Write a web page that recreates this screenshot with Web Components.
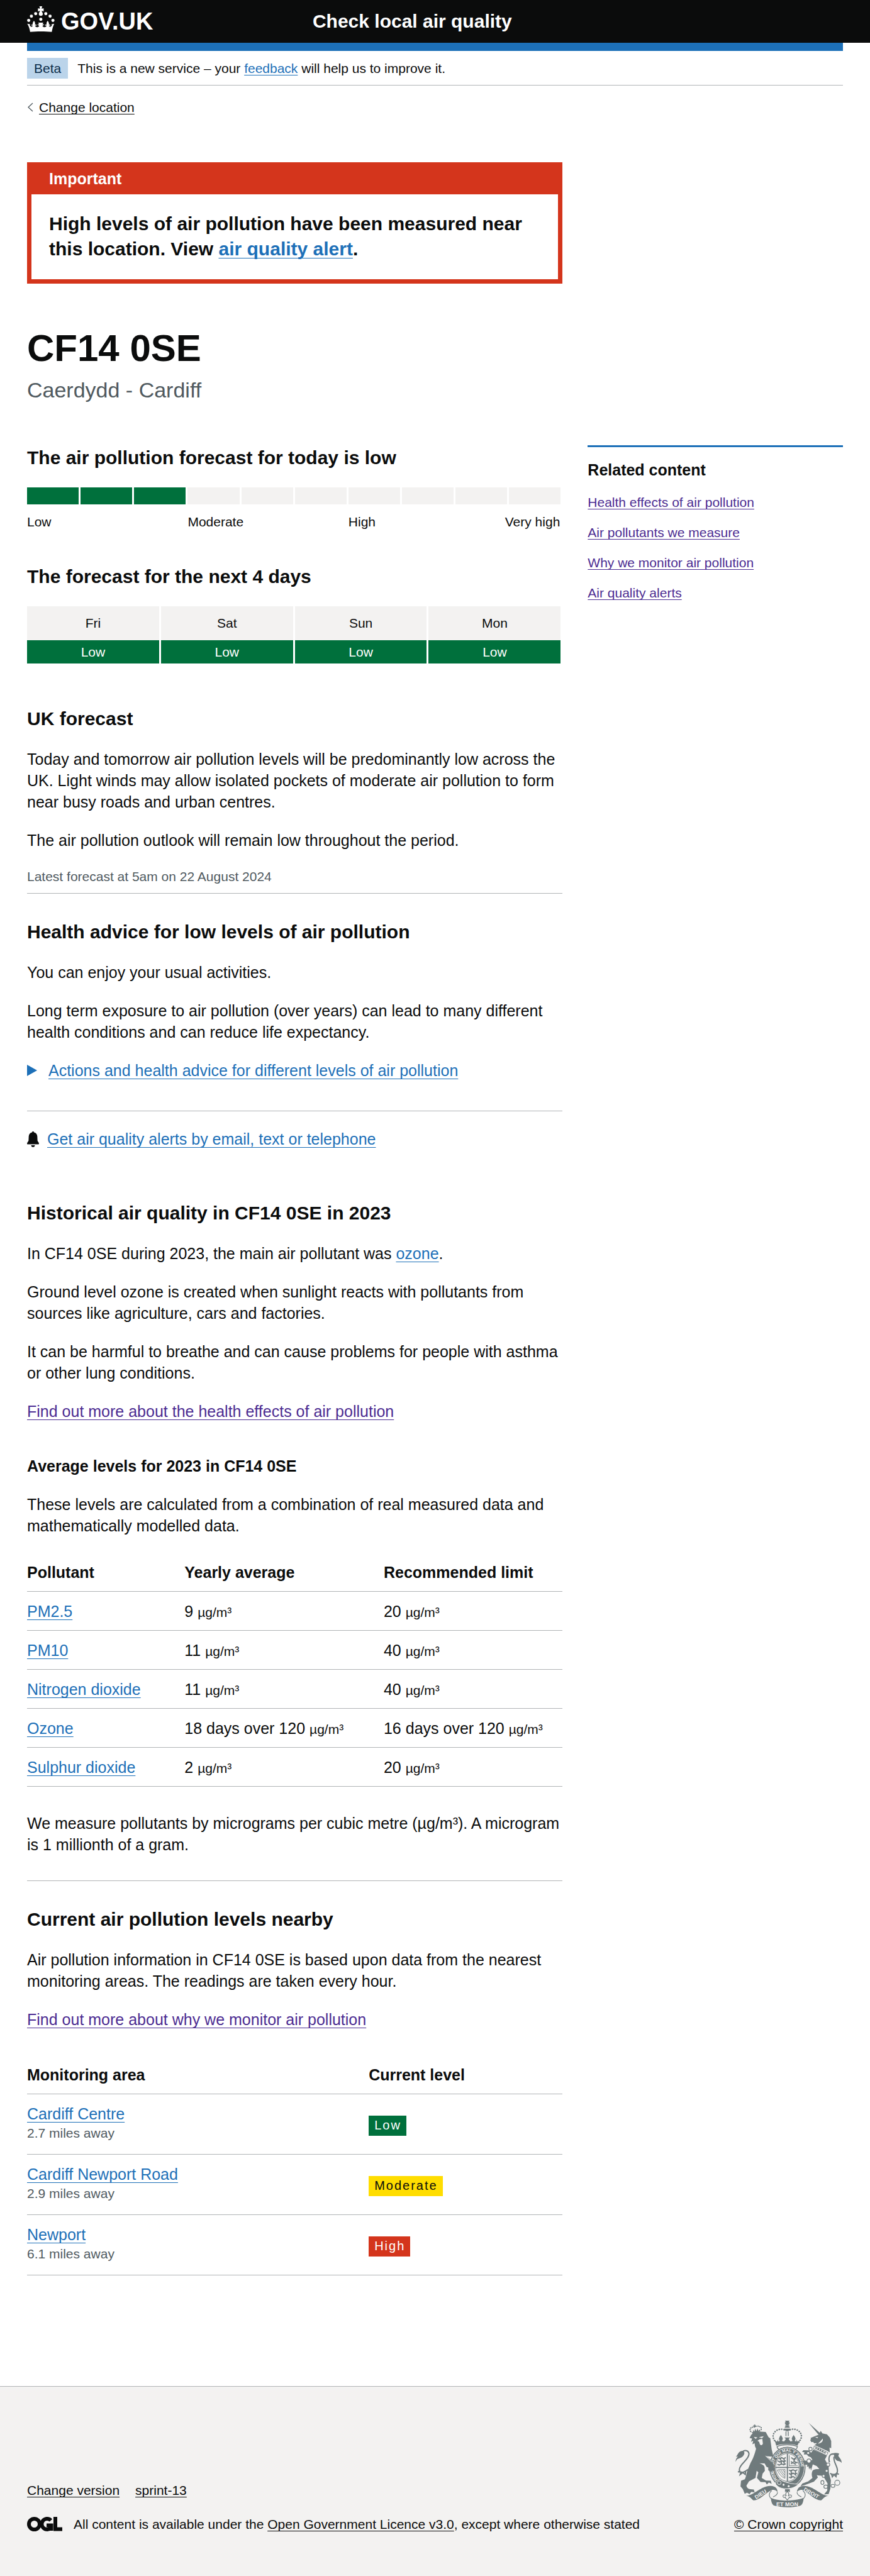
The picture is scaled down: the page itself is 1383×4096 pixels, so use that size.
<!DOCTYPE html>
<html lang="en">
<head>
<meta charset="utf-8">
<meta name="viewport" content="width=device-width, initial-scale=1">
<title>Check local air quality - GOV.UK</title>
<style>
  body {
    margin: 0;
    background: #fff;
    color: #0b0c0c;
    font-family: "Liberation Sans", Arial, Helvetica, sans-serif;
    font-size: 25px;
    line-height: 34px;
  }
</style>
</head>
<body>
<aq-header></aq-header>
<aq-phase-banner></aq-phase-banner>
<aq-layout>
  <aq-back-link slot="back">Change location</aq-back-link>
  <aq-alert slot="hero"></aq-alert>
  <aq-location slot="hero" area="Caerdydd - Cardiff">CF14 0SE</aq-location>
  <aq-today></aq-today>
  <aq-outlook></aq-outlook>
  <aq-uk-forecast></aq-uk-forecast>
  <aq-advice></aq-advice>
  <aq-history></aq-history>
  <aq-nearby></aq-nearby>
  <aq-related slot="aside"></aq-related>
</aq-layout>
<aq-footer></aq-footer>

<script>
const base = `
  :host { display: block; }
  * { box-sizing: border-box; }
  h1, h2, h3, p { margin: 0; }
  h2 { font-size: 30px; line-height: 40px; }
  h3 { font-size: 25px; line-height: 34px; }
  h2 + p, p + p, h3 + p { margin-top: 27px; }
  a { color: #1d70b8; text-decoration-line: underline; text-decoration-thickness: 1px; text-underline-offset: 4px; text-decoration-skip-ink: none; }
  a.visited { color: #4c2c92; }
  a.plain { color: #0b0c0c; }
  .small { font-size: 21px; line-height: 27px; }
  .muted { color: #505a5f; }
  hr { margin: 0; border: 0; height: 1px; background: #b1b4b6; }
  table { width: 100%; border-collapse: separate; border-spacing: 0; table-layout: fixed; text-align: left; }
  table.rows th, table.rows td { border-bottom: 1px solid #b1b4b6; padding: 14px 0 13px; font-weight: 400; }
  table.rows thead th { padding: 13px 0; font-weight: 700; }
  .wrap { padding-left: 43px; padding-right: 43px; }
`;

function define(name, css, html) {
  customElements.define(name, class extends HTMLElement {
    constructor() {
      super();
      const t = document.createElement('template');
      t.innerHTML = '<style>' + base + css + '</style>' + (typeof html === 'function' ? html(this) : html);
      this.attachShadow({ mode: 'open' }).append(t.content.cloneNode(true));
    }
  });
}

define('aq-crown', ':host { display: block; } svg { display: block; width: 44px; height: 41px; }', `
  <svg viewBox="72 42 193 181" fill="#fff" aria-hidden="true">
    <circle cx="83" cy="141" r="11"/><circle cx="102" cy="112" r="11"/><circle cx="132" cy="94" r="11"/>
    <circle cx="253" cy="141" r="11"/><circle cx="233" cy="112" r="11"/><circle cx="203" cy="94" r="11"/>
    <circle cx="168" cy="134" r="11"/>
    <path d="M158 42h20l-5 17 15-3v22l-14-5c1 10 8 14 8 23 0 8-6 13-14 13s-14-5-14-13c0-9 7-13 8-23l-14 5V56l15 3z"/>
    <path d="M74 164l20 5-4 7c8 14 18 12 22 2l-12-1c4-8 7-8 11-6-2-12 2-18 9-28 7 10 10 16 7 28 5-2 9-2 13 6l-13 1c4 12 20 16 30 2l-14-10c4-2 9-2 13 0-2-6-5-9-5-13h34c0 4-3 7-5 13 4-2 9-2 13 0l-14 10c10 14 26 10 30-2l-13-1c4-8 8-8 13-6-3-12 0-18 7-28 7 10 11 16 9 28 4-2 7-2 11 6l-12 1c4 10 14 12 22-2l-4-7 20-5c-9 20-14 38-17 58-44-5-108-5-152 0-3-20-8-38-20-58z"/>
  </svg>`);

define('aq-header', `
  header { background: #0b0c0c; color: #fff; }
  .bar { display: flex; align-items: center; height: 68px; }
  .logo { flex: 0 0 35%; display: flex; align-items: center; gap: 10px; color: #fff; text-decoration: none; font-size: 38px; font-weight: 700; line-height: 48px; }
  aq-crown { margin-bottom: 8px; }
  .service { font-size: 30px; line-height: 40px; font-weight: 700; color: #fff; text-decoration: none; }
  .stripe { height: 13px; background: #1d70b8; }
`, `
  <header><div class="wrap bar">
    <a class="logo" href="#"><aq-crown></aq-crown>GOV.UK</a>
    <a class="service" href="#">Check local air quality</a>
  </div></header>
  <div class="wrap"><div class="stripe"></div></div>`);

define('aq-phase-banner', `
  .row { display: flex; align-items: center; gap: 15px; padding: 11px 0 10px; border-bottom: 1px solid #b1b4b6; }
  .tag { background: #bbd4ea; color: #0c2d4a; padding: 3px 11px; font-weight: 400; }
  a { text-underline-offset: 3px; }
`, `
  <div class="wrap"><div class="row small">
    <strong class="tag">Beta</strong>
    <span>This is a new service – your <a href="#">feedback</a> will help us to improve it.</span>
  </div></div>`);

define('aq-back-link', `
  a { display: flex; width: max-content; align-items: center; gap: 8px; text-decoration: none; }
  svg { width: 11px; height: 15px; }
  span { text-decoration: underline 1px; text-underline-offset: 3px; text-decoration-skip-ink: none; }
`, `<a class="small plain" href="#"><svg viewBox="0 0 11 15" fill="none" stroke="#505a5f" stroke-width="1.300" aria-hidden="true"><path d="M9 1L2 7.500l7 6.500"/></svg><span><slot></slot></span></a>`);

define('aq-layout', `
  .back { padding-top: 21px; }
  .grid { display: grid; grid-template-columns: repeat(3, minmax(0, 1fr)); column-gap: 40px; padding-top: 74px; }
  .hero { grid-column: 1 / span 2; padding-bottom: 67px; }
  main { grid-column: 1 / span 2; grid-row: 2; display: flex; flex-direction: column; padding-bottom: 176px; }
  aside { grid-row: 2; }
`, `
  <div class="wrap">
    <div class="back"><slot name="back"></slot></div>
    <div class="grid">
      <div class="hero"><slot name="hero"></slot></div>
      <main><slot></slot></main>
      <aside><slot name="aside"></slot></aside>
    </div>
  </div>`);

define('aq-alert', `
  section { border: 7px solid #d4351c; border-top: 0; }
  .title { background: #d4351c; color: #fff; padding: 9px 28px 8px; font-size: 25px; line-height: 34px; }
  .body { padding: 27px 28px 28px; }
  .body p { font-size: 30px; line-height: 40px; font-weight: 700; }
`, `
  <section role="alert" aria-labelledby="t">
    <h2 class="title" id="t">Important</h2>
    <div class="body"><p>High levels of air pollution have been measured near this location. View <a href="#">air quality alert</a>.</p></div>
  </section>`);

define('aq-location', `
  :host { margin-top: 69px; }
  h1 { font-size: 60px; line-height: 68px; }
  p { margin-top: 12px; font-size: 34px; line-height: 41px; }
`, el => `<h1><slot></slot></h1><p class="muted">${el.getAttribute('area')}</p>`);

define('aq-today', `
  .scale { display: grid; grid-template-columns: repeat(10, 1fr); margin-top: 27px; }
  .scale i { height: 27px; background: #f3f2f1; border-right: 3px solid #fff; }
  .scale i.on { background: #00703c; }
  .names { display: grid; grid-template-columns: repeat(10, 1fr); margin-top: 14px; }
  .names span { grid-column: span 3; }
  .names .mid { grid-column: span 2; }
  .names .end { grid-column: span 2; text-align: right; padding-right: 4px; }
`, `
  <h2>The air pollution forecast for today is low</h2>
  <div class="scale" aria-hidden="true"><i class="on"></i><i class="on"></i><i class="on"></i><i></i><i></i><i></i><i></i><i></i><i></i><i></i></div>
  <div class="names small"><span>Low</span><span>Moderate</span><span class="mid">High</span><span class="end">Very high</span></div>`);

define('aq-outlook', `
  :host { margin-top: 54px; }
  table { margin-top: 27px; text-align: center; }
  th, td { border-right: 3px solid #fff; font-weight: 400; }
  th { background: #f3f2f1; padding: 13px 0 14px; }
  td { background: #00703c; color: #fff; padding: 5px 0; }
`, `
  <h2>The forecast for the next 4 days</h2>
  <table class="small">
    <thead><tr><th scope="col">Fri</th><th scope="col">Sat</th><th scope="col">Sun</th><th scope="col">Mon</th></tr></thead>
    <tbody><tr><td>Low</td><td>Low</td><td>Low</td><td>Low</td></tr></tbody>
  </table>`);

define('aq-uk-forecast', `
  :host { margin-top: 68px; }
  hr { margin-top: 13px; }
`, `
  <h2>UK forecast</h2>
  <p>Today and tomorrow air pollution levels will be predominantly low across the UK. Light winds may allow isolated pockets of moderate air pollution to form near busy roads and urban centres.</p>
  <p>The air pollution outlook will remain low throughout the period.</p>
  <p class="small muted">Latest forecast at 5am on 22 August 2024</p>
  <hr>`);

define('aq-advice', `
  :host { margin-top: 41px; }
  details { margin-top: 27px; }
  summary { display: flex; align-items: center; gap: 18px; color: #1d70b8; list-style: none; cursor: pointer; }
  summary svg { width: 16px; height: 18px; }
  summary span { text-decoration: underline 1px; text-underline-offset: 4px; text-decoration-skip-ink: none; }
  hr { margin: 47px 0 27px; }
  .alerts { display: flex; align-items: center; gap: 13px; }
  .alerts svg { width: 19px; height: 25px; }
`, `
  <h2>Health advice for low levels of air pollution</h2>
  <p>You can enjoy your usual activities.</p>
  <p>Long term exposure to air pollution (over years) can lead to many different health conditions and can reduce life expectancy.</p>
  <details>
    <summary><svg viewBox="0 0 16 18" fill="currentColor" aria-hidden="true"><path d="M0 0l16 9-16 9z"/></svg><span>Actions and health advice for different levels of air pollution</span></summary>
  </details>
  <hr>
  <div class="alerts">
    <svg viewBox="0 0 19 25" fill="#0b0c0c" aria-hidden="true"><path d="M9.500 0c1 0 1.500.7 1.500 1.600 3.300.7 5.200 3.200 5.300 6.400l.3 6.500c.1 1.600 2.400 3 2.400 5 0 .8-.4 1.100-1.200 1.100H1.200C.4 20.600 0 20.300 0 19.500c0-2 2.300-3.400 2.400-5L2.700 8C2.800 4.800 4.700 2.300 8 1.600 8 .7 8.500 0 9.500 0zM6.500 22h6c0 1.800-1.300 3-3 3s-3-1.200-3-3z"/></svg>
    <a href="#">Get air quality alerts by email, text or telephone</a>
  </div>`);

const unit = '<span class="small">µg/m³</span>';
const pollutants = [
  ['PM2.5', '9', '20'],
  ['PM10', '11', '40'],
  ['Nitrogen dioxide', '11', '40'],
  ['Ozone', '18 days over 120', '16 days over 120'],
  ['Sulphur dioxide', '2', '20']
];

define('aq-history', `
  :host { margin-top: 81px; }
  h3 { margin-top: 53px; }
  table { margin-top: 27px; }
  .a { width: 29.4%; } .b { width: 37.2%; }
  .note { margin-top: 41px; }
  hr { margin-top: 40px; }
`, `
  <h2>Historical air quality in CF14 0SE in 2023</h2>
  <p>In CF14 0SE during 2023, the main air pollutant was <a href="#">ozone</a>.</p>
  <p>Ground level ozone is created when sunlight reacts with pollutants from sources like agriculture, cars and factories.</p>
  <p>It can be harmful to breathe and can cause problems for people with asthma or other lung conditions.</p>
  <p><a class="visited" href="#">Find out more about the health effects of air pollution</a></p>
  <h3>Average levels for 2023 in CF14 0SE</h3>
  <p>These levels are calculated from a combination of real measured data and mathematically modelled data.</p>
  <table class="rows">
    <thead><tr><th class="a" scope="col">Pollutant</th><th class="b" scope="col">Yearly average</th><th scope="col">Recommended limit</th></tr></thead>
    <tbody>${pollutants.map(([n, y, r]) => `<tr><th scope="row"><a href="#">${n}</a></th><td>${y} ${unit}</td><td>${r} ${unit}</td></tr>`).join('')}</tbody>
  </table>
  <p class="note">We measure pollutants by micrograms per cubic metre (µg/m³). A microgram is 1 millionth of a gram.</p>
  <hr>`);

define('aq-tag', `
  :host { display: inline-block; vertical-align: middle; padding: 2px 8px 3px 9px; font-size: 20px; line-height: 27px; letter-spacing: 2px; background: #00703c; color: #fff; }
  :host([level="moderate"]) { background: #ffdd00; color: #0b0c0c; }
  :host([level="high"]) { background: #d4351c; }
`, '<slot></slot>');

const areas = [
  ['Cardiff Centre', '2.7', 'Low'],
  ['Cardiff Newport Road', '2.9', 'Moderate'],
  ['Newport', '6.1', 'High']
];

define('aq-nearby', `
  :host { margin-top: 41px; }
  table { margin-top: 41px; }
  .a { width: 63.8%; }
  tbody th .small { display: block; padding-bottom: 7px; }
`, `
  <h2>Current air pollution levels nearby</h2>
  <p>Air pollution information in CF14 0SE is based upon data from the nearest monitoring areas. The readings are taken every hour.</p>
  <p><a class="visited" href="#">Find out more about why we monitor air pollution</a></p>
  <table class="rows">
    <thead><tr><th class="a" scope="col">Monitoring area</th><th scope="col">Current level</th></tr></thead>
    <tbody>${areas.map(([n, d, l]) => `<tr><th scope="row"><a href="#">${n}</a><span class="small muted">${d} miles away</span></th><td><aq-tag level="${l.toLowerCase()}">${l}</aq-tag></td></tr>`).join('')}</tbody>
  </table>`);

define('aq-related', `
  nav { border-top: 3px solid #1d70b8; padding-top: 19px; }
  ul { list-style: none; margin: 21px 0 0; padding: 0; display: flex; flex-direction: column; gap: 21px; }
  a { text-underline-offset: 3px; }
`, `
  <nav aria-labelledby="r"><h3 id="r">Related content</h3>
    <ul class="small">
      <li><a class="visited" href="#">Health effects of air pollution</a></li>
      <li><a class="visited" href="#">Air pollutants we measure</a></li>
      <li><a class="visited" href="#">Why we monitor air pollution</a></li>
      <li><a class="visited" href="#">Air quality alerts</a></li>
    </ul>
  </nav>`);

define('aq-crest', 'svg { display: block; width: 169px; height: 138px; }', `
  <svg viewBox="84 66 750 612" fill="#6f7a7c" aria-hidden="true">
    <!-- crown -->
    <path d="M434 66h32l-8 12 8-3v16l-8-3 8 12h-32l8-12-8 3V75l8 3z"/>
    <path d="M432 116a18 15 0 0 1 36 0zM428 122h44c0 10-10 18-22 18s-22-8-22-18zM438 142h6v32h-6zM454 142h6v32h-6z"/>
    <g fill="none" stroke="#6f7a7c" stroke-width="11" stroke-linecap="round" stroke-dasharray="1 16">
      <path d="M428 130C390 116 348 142 350 180c2 14 10 26 18 38"/><path d="M470 130c38-14 82 10 80 50-2 14-10 26-18 38"/></g>
    <path d="M360 200l16 14 12-18-4 16 12-2c0-10-8-16-2-24 2-8 8-12 11-20 3 8 9 12 11 20 6 8-2 14-2 24l14 2 12-16-10-12h40l-10 12 12 16 14-2c0-10-8-16-2-24 2-8 8-12 11-20 3 8 9 12 11 20 6 8-2 14-2 24l12 2-4-16 12 18 16-14-18 42c-42-14-108-14-150 0z"/>
    <path d="M378 248c40-16 104-16 144 0-2 14-8 18-14 22-36-20-80-20-116 0-6-4-14-10-14-22z" fill="none" stroke="#6f7a7c" stroke-width="6"/>
    <!-- garter and shield -->
    <ellipse cx="451" cy="396" rx="128" ry="146"/>
    <ellipse cx="451" cy="396" rx="119" ry="137" fill="none" stroke="#f3f2f1" stroke-width="4"/>
    <ellipse cx="451" cy="396" rx="88" ry="104" fill="#f3f2f1"/>
    <ellipse cx="451" cy="396" rx="83" ry="98" fill="none" stroke="#6f7a7c" stroke-width="4"/>
    <path d="M447 296h8v200h-8zM366 392h170v8H366z"/>
    <g fill="none" stroke="#6f7a7c" stroke-width="8">
      <path d="M388 328l12 8 10-10 14 8 16-8M384 350l14 8 12-10 14 8 16-8M380 374l14 6 14-10 16 8 16-8M402 326v20M428 330v50M408 350v28"/>
      <path d="M464 386v-76M464 382h60" stroke-width="4"/><path d="M478 326l16 12 14-8-12 22 22 10-24 4-18-12M476 370l16-8 18 14"/>
      <path d="M462 414l14 8 14-10 16 8 16-8M462 438l14 8 14-10 16 8 12-8M462 464l14 6 14-10 14 8M478 412v54M508 414v40"/>
      <path d="M380 414c18-6 34 0 54-4v62c-26-8-44-34-54-58zM392 416l38 48M406 416l26 34M420 414l12 18" stroke-width="4"/>
    </g>
    <defs><path id="ring" d="M382 480A96 116 0 1 1 520 482"/></defs>
    <text font-family="Liberation Sans, sans-serif" font-weight="700" font-size="29" fill="#f3f2f1"><textPath href="#ring">HONI SOIT QUI MAL Y PENSE</textPath></text>
    <path d="M372 494c20-16 34-16 40-4 30 14 80 24 116 24-30 36-116 46-150 10-12-8-12-20-6-30z" stroke="#f3f2f1" stroke-width="4"/>
    <circle cx="393" cy="504" r="13" fill="none" stroke="#f3f2f1" stroke-width="4"/><circle cx="424" cy="518" r="7" fill="#f3f2f1"/><circle cx="460" cy="528" r="7" fill="#f3f2f1"/>
    <!-- lion -->
    <path d="M196 166l-12 22 18 4-8 24 16-8-6 24 16-6 2 20 8 18-8 28c-8 26-18 50-30 70l-24 58c-8 30-10 48-18 60l-26 10-4 40 16 18 14 34 16-8 18 10 12-16 24 4-6-20-24-2c-14-2-26-10-28-26l18-30 46-24 8-50 12 10-10 40 26 28 34 2 10 16 14-14 20 10-6-22-34-2-30-18 6-30 16-20-2-26c-4-18-22-22-36-28l36 2 14 24 12 4v20l20 10 10-8 10 6 2-24c-2-28-16-54-40-70l-18-14 52 4-12-52-10-78-12-8-20-36-48-4-40 10z"/>
    <path d="M214 180l26 4-14 10zM250 182l34-6-12 14zM240 208l14-10 20-4 4 34c-4 14-18 14-22 2l-4-14z" fill="#f3f2f1"/>
    <path d="M296 314l44 42" stroke="#f3f2f1" stroke-width="4"/>
    <path d="M196 144l12 4 2-18 8 14 6-22 8 18 8-20 6 18 10-10 4 12-54 18z"/>
    <path d="M192 142c-10-16 0-32 20-30 12-8 34-10 44-4 16 4 12 20 6 30" fill="none" stroke="#6f7a7c" stroke-width="9" stroke-linecap="round" stroke-dasharray="1 12"/>
    <path d="M216 94h8v20h-8zM209 100h22v7h-22z"/>
    <g fill="none" stroke="#6f7a7c" stroke-width="9"><path d="M172 410c-26 24-60 30-60 2 0-42 68-68 68-112-2-22-22-28-40-20M120 424l-18 2 22 2-6 18 18-14 18 14 2-22"/></g>
    <path d="M84 356c4-20 10-30 18-36l-14 0c16-14 14-40 52-42l8 14c-2 28-30 40-50 44z"/>
    <!-- unicorn -->
    <path d="M600 80l84 76-14 8z"/>
    <path d="M672 164l14-26 12 18 32 6 20 22 10 26 0 50-12-4 2 34-16-10-92-42c6-4 14-8 16-14l-18 2-8-10-12 2-8-16 6-8-4-6z"/>
    <path d="M646 180l22 2-6 8zM700 192c6 20-12 34-34 36l14-12z" fill="#f3f2f1"/>
    <path d="M640 244l98 48-12 20-90-46z" fill="#f3f2f1" stroke="#6f7a7c" stroke-width="4"/>
    <path d="M646 262l8-14 6 20 10-14 6 22 10-14 6 22 10-14 6 22 12-10 0 18z"/>
    <path d="M634 270l96 42-14 28 26 46 2 50 14 50-4 60-12 38-32 2 22-28 2-50-32-54c-18 0-34 0-44-4l8 16-28 30-60 22-34 10 12-18 42-16 30-24c-8-20-6-40 2-52 10-12 28-10 46-12l-18-20-28-12 -12 44-6-20-8 12-4-22-12 4 4-14-26-2 2-12-14-8 18-10 32 6 24-10-12-18-18-8 -10-12-22 0 6-14-18-4 10-12 38 2 16 16z"/>
    <g fill="none" stroke="#6f7a7c" stroke-width="9"><path d="M748 360c-10-34 0-60 28-60M780 320c-8 46 36 74 22 112-8 16-28 18-50 6M762 442l6 20 12-16 14 14 4-22 16 6"/></g>
    <path d="M758 306c16-16 38-16 58-8l-6 16c10 16 24 26 24 50-8-10-18-14-30-14-18-14-24-24-24-44z"/>
    <g stroke="#6f7a7c" stroke-width="5" fill="#f3f2f1"><circle cx="614" cy="266" r="12"/><circle cx="598" cy="294" r="10"/><circle cx="603" cy="350" r="14"/><circle cx="738" cy="376" r="12"/><circle cx="728" cy="420" r="10"/><circle cx="706" cy="456" r="10"/><ellipse cx="698" cy="502" rx="11" ry="14"/><ellipse cx="722" cy="532" rx="14" ry="12"/><ellipse cx="772" cy="526" rx="14" ry="11"/><circle cx="803" cy="504" r="18"/></g>
    <!-- motto ribbon -->
    <path d="M158 596c58-2 110-74 176-70 34 2 46 18 48 44-14-16-28-18-42-14-54 26-80 70-128 72-14-8-24-30-54-32zM742 596c-58-2-110-74-176-70-34 2-46 18-48 44 14-16 28-18 42-14 54 26 80 70 128 72 14-8 24-30 54-32z"/>
    <path d="M340 560c-30 24-14 56 10 60M380 570c4 20-16 26-30 34M560 560c30 24 14 56-10 60M520 570c-4 20 16 26 30 34" fill="none" stroke="#6f7a7c" stroke-width="5"/>
    <path d="M334 610c60 26 172 26 232 0-2 24-6 42-20 54-54 18-138 18-192 0-14-12-18-30-20-54z"/>
    <g font-family="Liberation Sans, sans-serif" font-weight="700" fill="#f3f2f1" font-size="40"><text x="450" y="668" text-anchor="middle">ET MON</text><text transform="translate(230 620) rotate(-32)" font-size="38">DIEU</text><text transform="translate(562 558) rotate(30)" font-size="38">DROIT</text></g>
    <path d="M434 550h34v22l-10-8-8 10-8-10-8 8z"/>
    <path d="M450 564c14 14 14 24 6 34 8-12 26-12 24 2-2 10-10 10-16 4l-2 8-12 14-12-14-2-8c-6 6-14 6-16-4-2-14 16-14 24-2-8-10-8-20 6-34z" fill="#f3f2f1" stroke="#6f7a7c" stroke-width="5"/>
  </svg>`);

define('aq-footer', `
  footer { background: #f3f2f1; border-top: 1px solid #b1b4b6; padding-top: 54px; padding-bottom: 69px; display: flex; justify-content: space-between; align-items: flex-end; }
  ul { list-style: none; display: flex; gap: 25px; margin: 0 0 27px; padding: 0; }
  .licence { display: flex; align-items: center; gap: 18px; }
  .licence svg { width: 56px; height: 23px; }
  .right { display: flex; flex-direction: column; align-items: center; gap: 13px; }
  a { text-underline-offset: 3px; }
`, `
  <footer class="wrap small">
    <div>
      <ul><li><a class="plain" href="#">Change version</a></li><li><a class="plain" href="#">sprint-13</a></li></ul>
      <div class="licence">
        <svg viewBox="0 0 56 23" fill="none" stroke="#0b0c0c" stroke-width="6" role="img" aria-label="Open Government Licence logo"><ellipse cx="11.500" cy="11.500" rx="8.500" ry="8.500"/><path d="M38 5.500A8.500 8.500 0 1 0 37 18.200M31 13.500h7.500V22M45 0v19.500h11"/></svg>
        <span>All content is available under the <a class="plain" href="#">Open Government Licence v3.0</a>, except where otherwise stated</span>
      </div>
    </div>
    <div class="right"><aq-crest></aq-crest><a class="plain" href="#">© Crown copyright</a></div>
  </footer>`);
</script>
</body>
</html>
